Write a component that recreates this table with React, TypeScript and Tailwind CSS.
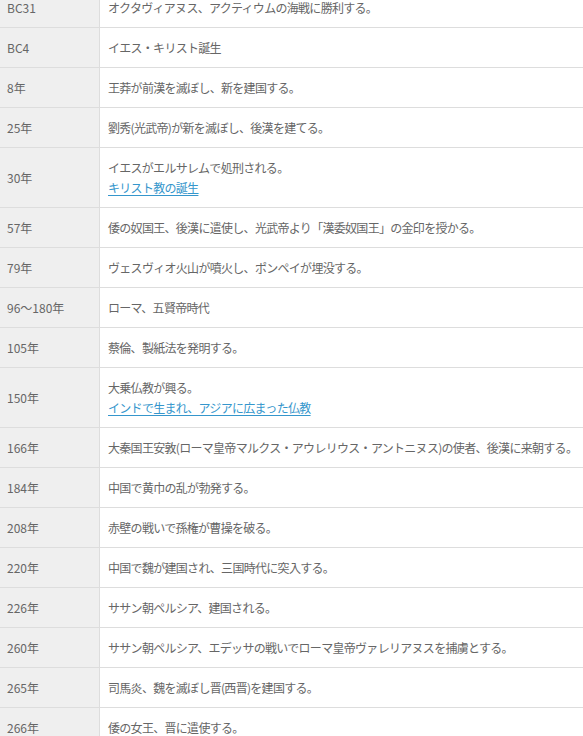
const rows: { year: string; text: string; link?: string }[] = [
  { year: "BC31", text: "オクタヴィアヌス、アクティウムの海戦に勝利する。" },
  { year: "BC4", text: "イエス・キリスト誕生" },
  { year: "8年", text: "王莽が前漢を滅ぼし、新を建国する。" },
  { year: "25年", text: "劉秀(光武帝)が新を滅ぼし、後漢を建てる。" },
  { year: "30年", text: "イエスがエルサレムで処刑される。", link: "キリスト教の誕生" },
  { year: "57年", text: "倭の奴国王、後漢に遣使し、光武帝より「漢委奴国王」の金印を授かる。" },
  { year: "79年", text: "ヴェスヴィオ火山が噴火し、ポンペイが埋没する。" },
  { year: "96〜180年", text: "ローマ、五賢帝時代" },
  { year: "105年", text: "蔡倫、製紙法を発明する。" },
  { year: "150年", text: "大乗仏教が興る。", link: "インドで生まれ、アジアに広まった仏教" },
  { year: "166年", text: "大秦国王安敦(ローマ皇帝マルクス・アウレリウス・アントニヌス)の使者、後漢に来朝する。" },
  { year: "184年", text: "中国で黄巾の乱が勃発する。" },
  { year: "208年", text: "赤壁の戦いで孫権が曹操を破る。" },
  { year: "220年", text: "中国で魏が建国され、三国時代に突入する。" },
  { year: "226年", text: "ササン朝ペルシア、建国される。" },
  { year: "260年", text: "ササン朝ペルシア、エデッサの戦いでローマ皇帝ヴァレリアヌスを捕虜とする。" },
  { year: "265年", text: "司馬炎、魏を滅ぼし晋(西晋)を建国する。" },
  { year: "266年", text: "倭の女王、晋に遣使する。" },
];

export default function App() {
  return (
    <div className="w-[583px] h-[736px] overflow-hidden bg-white font-['Noto_Sans_CJK_JP','Noto_Sans',sans-serif] text-[12px] leading-[20px] text-[#666]">
      {/* 上にスクロールされた状態 */}
      <div className="-mt-[12px]">
        {rows.map((r) => (
          <div key={r.year} className="flex border-b border-[#dddddd]">
            <div className="w-[100px] shrink-0 flex items-center bg-[#efefef] border-r border-[#dddddd] pl-[7px]">
              {r.year}
            </div>
            <div className="flex-1 pl-[8px] pt-[10px] pb-[9px] whitespace-nowrap tracking-[-0.7px]">
              <div>{r.text}</div>
              {r.link && (
                <a href="#" className="text-[#3596cc] underline underline-offset-2">
                  {r.link}
                </a>
              )}
            </div>
          </div>
        ))}
      </div>
    </div>
  );
}
